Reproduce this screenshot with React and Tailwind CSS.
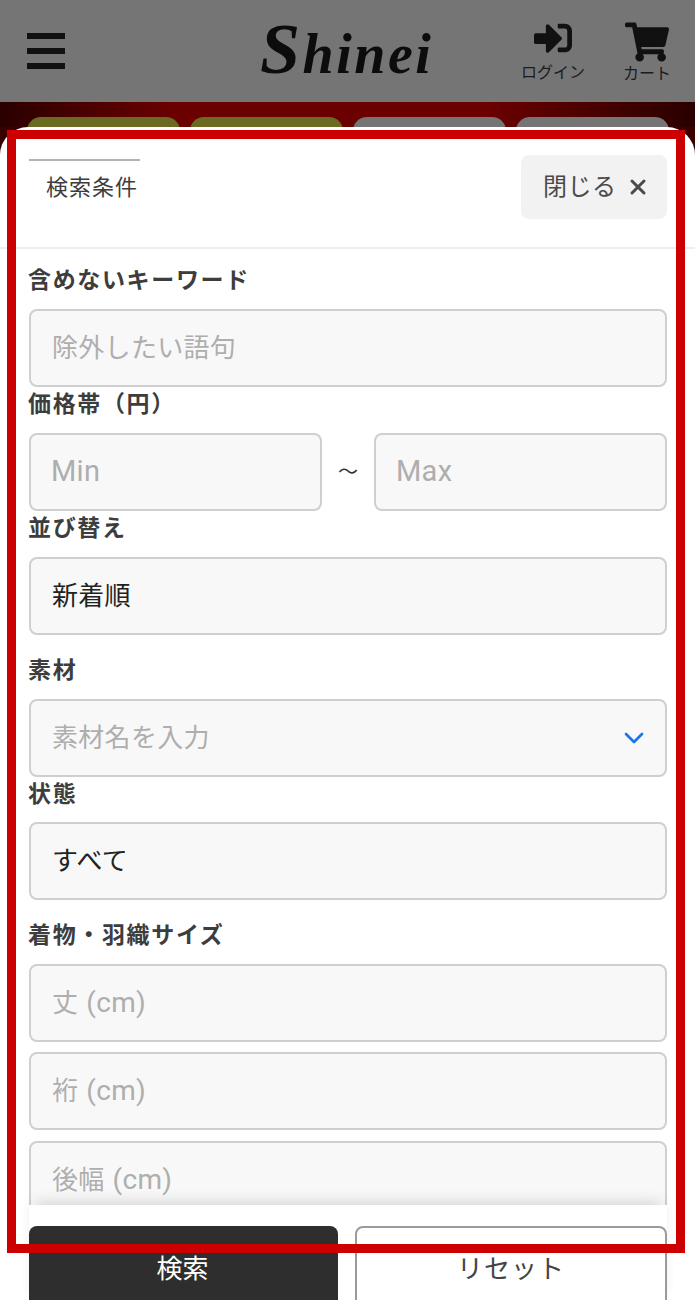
import React from "react";
import { FaSignInAlt, FaShoppingCart } from "react-icons/fa";
import { ChevronDown, X } from "lucide-react";

const fieldClass =
  "flex h-[78px] items-center rounded-[8px] border-2 border-[#cfcfcf] bg-[#f8f8f8] px-[21px] text-[26px] tracking-[0.3px]";

function Label({ children, className = "" }) {
  return (
    <div className={`-ml-[1px] pt-[3px] text-[23px] leading-[30px] font-bold tracking-[1.65px] text-[#3d3d3d] ${className}`}>
      {children}
    </div>
  );
}

function Field({ children, placeholder, className = "" }) {
  return (
    <div className={`${fieldClass} ${placeholder ? "text-[#aeaeae]" : "text-[#222222]"} ${className}`}>
      {children}
    </div>
  );
}

function Tab({ olive }) {
  return <div className={`h-[30px] w-[153px] rounded-t-[14px] ${olive ? "bg-[#6b6a22]" : "bg-[#757575]"}`} />;
}

export default function App() {
  return (
    <div className="relative h-[1300px] w-[695px] overflow-hidden bg-[#3a0000] font-['Roboto','Noto_Sans_CJK_JP',sans-serif]">
      <header className="flex h-[102px] items-center bg-[#757575] pr-[24px] pl-[27px]">
        <div className="flex w-[39px] flex-col gap-[9px]">
          <span className="h-[6px] bg-[#111111]" />
          <span className="h-[6px] bg-[#111111]" />
          <span className="h-[6px] bg-[#111111]" />
        </div>
        <div className="ml-[195px] w-[172px] font-['Liberation_Serif',serif] text-[56px] leading-[102px] font-bold tracking-[2.5px] whitespace-nowrap text-[#0c0c0c] italic">
          <span className="text-[72px]">S</span>hinei
        </div>
        <div className="ml-[89px] flex w-[64px] flex-col items-center text-[16px] leading-[20px] whitespace-nowrap text-[#1c1c1c]">
          <FaSignInAlt className="mb-[6px] h-[38px] w-[38px] text-[#111111]" />
          ログイン
        </div>
        <div className="ml-[38px] flex w-[48px] flex-col items-center pt-[3px] text-[16px] leading-[20px] whitespace-nowrap text-[#1c1c1c]">
          <FaShoppingCart className="mb-[2px] h-[40px] w-[44px] text-[#111111]" />
          カート
        </div>
      </header>

      <div className="flex h-[25px] gap-[10px] overflow-hidden bg-[linear-gradient(90deg,#2a0000_0%,#6b0000_25%,#6b0000_70%,#2a0000_100%)] pt-[15px] pl-[27px]">
        <Tab olive />
        <Tab olive />
        <Tab />
        <Tab />
      </div>

      <div className="flex h-[1173px] flex-col overflow-hidden rounded-t-[28px] bg-white">
        <div className="flex h-[122px] shrink-0 items-start justify-between border-b-2 border-[#efefef] pt-[28px] pr-[28px] pl-[29px]">
          <div className="mt-[4px] w-[111px] border-t-2 border-[#b3b3b3] pt-[11px] pl-[17px] text-[22px] leading-[32px] tracking-[1px] whitespace-nowrap text-[#3d3d3d]">
            検索条件
          </div>
          <div className="flex h-[64px] w-[146px] items-center gap-[9px] rounded-[8px] bg-[#f2f2f2] pl-[22px] text-[24px] tracking-[0.5px] text-[#4a4a4a]">
            閉じる
            <X className="h-[24px] w-[24px]" strokeWidth={3} />
          </div>
        </div>

        <div className="h-[956px] shrink-0 overflow-hidden pt-[14px] pr-[28px] pl-[29px]">
          <Label className="h-[46px]">含めないキーワード</Label>
          <Field placeholder>除外したい語句</Field>
          <Label className="h-[46px]">価格帯（円）</Label>
          <div className="flex items-center">
            <Field placeholder className="w-[293px] pl-[20px] text-[29px]">Min</Field>
            <span className="w-[52px] text-center text-[20px] text-[#333333]">〜</span>
            <Field placeholder className="flex-1 pl-[20px] text-[29px]">Max</Field>
          </div>
          <Label className="h-[46px]">並び替え</Label>
          <Field>新着順</Field>
          <Label className="mt-[18px] h-[46px]">素材</Label>
          <Field placeholder className="justify-between pr-[15px]">
            素材名を入力
            <ChevronDown className="h-[32px] w-[32px] text-[#1877e6]" strokeWidth={2} />
          </Field>
          <Label className="h-[45px]">状態</Label>
          <Field>すべて</Field>
          <Label className="mt-[18px] h-[46px]">着物・羽織サイズ</Label>
          <Field placeholder>丈 <span className="ml-[8px] text-[28px]">(cm)</span></Field>
          <Field placeholder className="mt-[10px]">裄 <span className="ml-[8px] text-[28px]">(cm)</span></Field>
          <Field placeholder className="mt-[11px]">後幅 <span className="ml-[8px] text-[28px]">(cm)</span></Field>
        </div>

        <div className="relative mr-[28px] ml-[29px] flex shrink-0 gap-[17px] bg-white pt-[21px] shadow-[0_-8px_14px_-6px_rgba(0,0,0,0.16)]">
          <div className="flex h-[84px] w-[309px] items-center justify-center rounded-t-[8px] bg-[#2e2e2e] pt-[2px] pr-[2px] text-[26px] text-white">
            検索
          </div>
          <div className="flex h-[84px] flex-1 items-center justify-center rounded-t-[8px] border-2 border-[#9a9a9a] bg-white pt-[2px] text-[26px] tracking-[1px] text-[#444444]">
            リセット
          </div>
        </div>
      </div>

      <div className="pointer-events-none absolute top-[130px] left-[7px] h-[1123px] w-[678px] border-[9px] border-[#cc0000]" />
    </div>
  );
}
